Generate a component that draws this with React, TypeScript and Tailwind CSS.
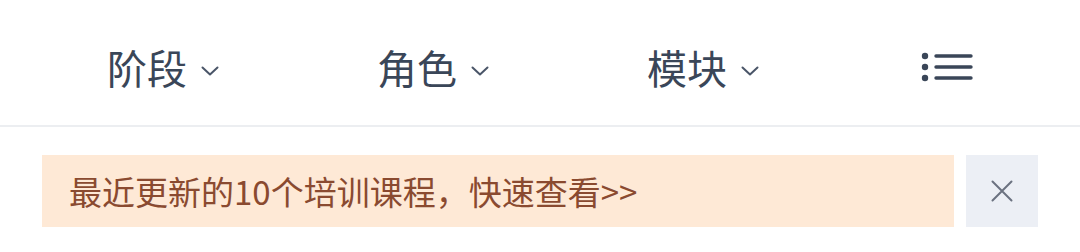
import React from "react";

const font = '"Noto Sans CJK SC", "Noto Sans", sans-serif';

function Chevron() {
  return (
    <svg width="18" height="10" viewBox="0 0 18 10" fill="none" className="ml-[14px] mt-[8px]">
      <path d="M1.5 1.5 L9 8.5 L16.5 1.5" stroke="#4a5568" strokeWidth="2" strokeLinecap="round" strokeLinejoin="round" />
    </svg>
  );
}

function Tab({ label }: { label: string }) {
  return (
    <div className="flex items-center justify-start pl-[107px]">
      <span className="text-[40px] leading-none text-[#3a4658]">{label}</span>
      <Chevron />
    </div>
  );
}

export default function App() {
  return (
    <div className="w-[1080px] h-[252px] bg-white" style={{ fontFamily: font }}>
      <div className="grid grid-cols-4 h-[127px] pt-[8px] border-b-2 border-[#eceef1]">
        <Tab label="阶段" />
        <Tab label="角色" />
        <Tab label="模块" />
        <div className="flex items-center justify-center pl-[4px]">
          <svg width="52" height="32" viewBox="0 0 52 32" fill="none">
            <circle cx="4" cy="5" r="3.2" fill="#3a4658" />
            <circle cx="4" cy="16" r="3.2" fill="#3a4658" />
            <circle cx="4" cy="27" r="3.2" fill="#3a4658" />
            <path d="M15 5 H50 M15 16 H50 M15 27 H50" stroke="#3a4658" strokeWidth="3.4" strokeLinecap="round" />
          </svg>
        </div>
      </div>
      <div className="flex gap-[12px] px-[42px] mt-[28px]">
        <div className="flex-1 h-[72px] bg-[#fee9d6] flex items-center pl-[27px]">
          <span className="text-[33px] leading-none text-[#8a4a30]">最近更新的10个培训课程，快速查看&gt;&gt;</span>
        </div>
        <div className="w-[72px] h-[72px] bg-[#eceff5] flex items-center justify-center">
          <svg width="22" height="22" viewBox="0 0 22 22" fill="none">
            <path d="M1.5 1.5 L20.5 20.5 M20.5 1.5 L1.5 20.5" stroke="#6b7280" strokeWidth="2" strokeLinecap="round" />
          </svg>
        </div>
      </div>
    </div>
  );
}
